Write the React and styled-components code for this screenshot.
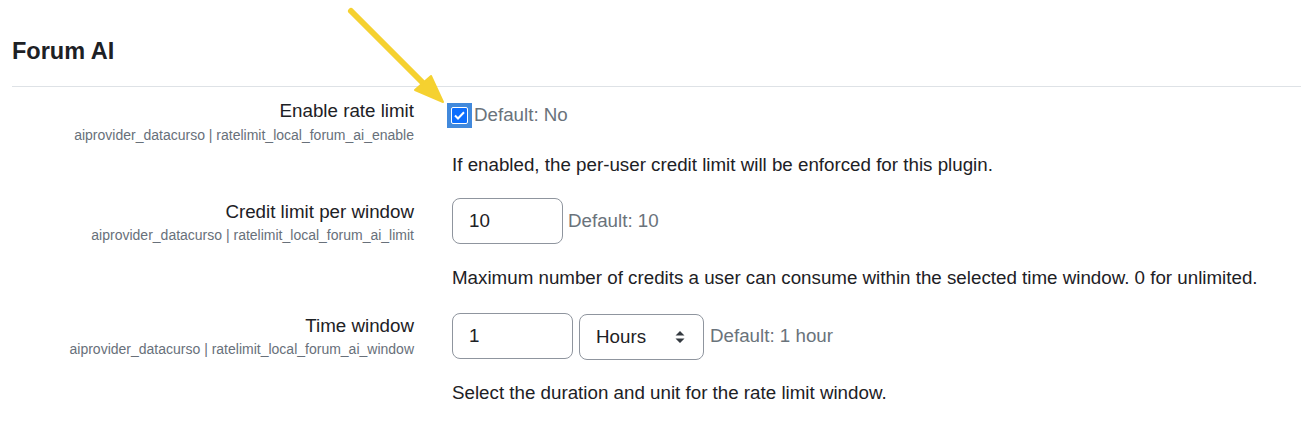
import React from 'react';
import styled, { createGlobalStyle } from 'styled-components';

const Global = createGlobalStyle`
  html, body {
    margin: 0;
    background: #fff;
    font-family: "Liberation Sans", Arial, sans-serif;
    color: #1d2125;
  }
`;

const Page = styled.div`
  position: relative;
  padding: 37px 0 0 12px;
  height: 385px;
  overflow: hidden;
`;

const Heading = styled.h3`
  margin: 0;
  padding-bottom: 21px;
  border-bottom: 1px solid #dee2e6;
  font-size: 23.5px;
  font-weight: 700;
  line-height: 1.2;
  color: #1d2125;
`;

const Row = styled.div`
  display: grid;
  grid-template-columns: 402px 1fr;
  column-gap: 38px;
  margin-top: ${p => p.$mt || '20px'};
`;

const LabelCol = styled.div`
  text-align: right;
`;

const Label = styled.div`
  font-size: 18.75px;
  line-height: 28px;
  color: #1d2125;
`;

const Key = styled.div`
  font-size: 14px;
  line-height: 21px;
  color: #68707a;
  margin-top: -0.5px;
`;

const Line = styled.div`
  display: flex;
  align-items: center;
  gap: ${p => p.$gap || '6px'};
  padding-top: ${p => p.$pad || '0'};
`;

const Default = styled.span`
  font-size: 18.75px;
  line-height: 28px;
  color: #6a737b;
`;

const Desc = styled.div`
  margin-top: ${p => p.$mt || '20px'};
  font-size: 18.75px;
  line-height: 28px;
  color: #1d2125;
`;

const Input = styled.input`
  box-sizing: border-box;
  width: ${p => p.$w}px;
  height: 46px;
  padding: 8px 16px;
  border: 1px solid #8f959e;
  border-radius: 8px;
  font-family: inherit;
  font-size: 18.75px;
  line-height: 28px;
  color: #1d2125;
  background: #fff;
  outline: none;
`;

const SelectBox = styled.div`
  box-sizing: border-box;
  width: 125px;
  height: 46px;
  margin-top: 2px;
  padding: 0 18px 0 16px;
  border: 1px solid #8f959e;
  border-radius: 8px;
  display: flex;
  align-items: center;
  justify-content: space-between;
  font-size: 18.75px;
  color: #1d2125;
`;

const CheckRing = styled.span`
  display: inline-flex;
  margin-left: -5px;
  padding: 4px;
  background: #4189dc;
`;

const CheckBox = styled.span`
  box-sizing: border-box;
  width: 17px;
  height: 17px;
  border: 1px solid #fff;
  border-radius: 2px;
  background: #0d6efd;
  display: flex;
  align-items: center;
  justify-content: center;
`;

const Arrow = styled.svg`
  position: absolute;
  left: 0;
  top: 0;
  pointer-events: none;
`;

function Caret() {
  return (
    <svg width="10" height="14" viewBox="0 0 10 14">
      <path d="M5 1 L9.5 5.5 H0.5 Z M5 13 L0.5 8.5 H9.5 Z" fill="#343a40" />
    </svg>
  );
}

export default function App() {
  return (
    <Page>
      <Global />
      <Heading>Forum AI</Heading>

      <Row $mt="10px">
        <LabelCol>
          <Label>Enable rate limit</Label>
          <Key>aiprovider_datacurso | ratelimit_local_forum_ai_enable</Key>
        </LabelCol>
        <div>
          <Line $pad="4px" $gap="2px">
            <CheckRing>
              <CheckBox>
                <svg width="11" height="9" viewBox="0 0 11 9">
                  <path d="M1 4.5 L4 7.5 L10 1.2" fill="none" stroke="#fff" strokeWidth="2" />
                </svg>
              </CheckBox>
            </CheckRing>
            <Default>Default: No</Default>
          </Line>
          <Desc $mt="21.5px">If enabled, the per-user credit limit will be enforced for this plugin.</Desc>
        </div>
      </Row>

      <Row $mt="19px">
        <LabelCol>
          <Label>Credit limit per window</Label>
          <Key>aiprovider_datacurso | ratelimit_local_forum_ai_limit</Key>
        </LabelCol>
        <div>
          <Line $gap="5px">
            <Input $w={111} defaultValue="10" />
            <Default>Default: 10</Default>
          </Line>
          <Desc>Maximum number of credits a user can consume within the selected time window. 0 for unlimited.</Desc>
        </div>
      </Row>

      <Row>
        <LabelCol>
          <Label>Time window</Label>
          <Key>aiprovider_datacurso | ratelimit_local_forum_ai_window</Key>
        </LabelCol>
        <div>
          <Line>
            <Input $w={121} defaultValue="1" />
            <SelectBox>
              <span>Hours</span>
              <Caret />
            </SelectBox>
            <Default>Default: 1 hour</Default>
          </Line>
          <Desc $mt="19.5px">Select the duration and unit for the rate limit window.</Desc>
        </div>
      </Row>

      <Arrow width="1301" height="422" viewBox="0 0 1301 422">
        <line x1="351" y1="11" x2="424" y2="84" stroke="#f5d130" strokeWidth="6" strokeLinecap="round" />
        <path d="M415 90 L431 76 L443 102 Z" fill="#f5d130" stroke="#f5d130" strokeWidth="2" strokeLinejoin="round" />
      </Arrow>
    </Page>
  );
}
